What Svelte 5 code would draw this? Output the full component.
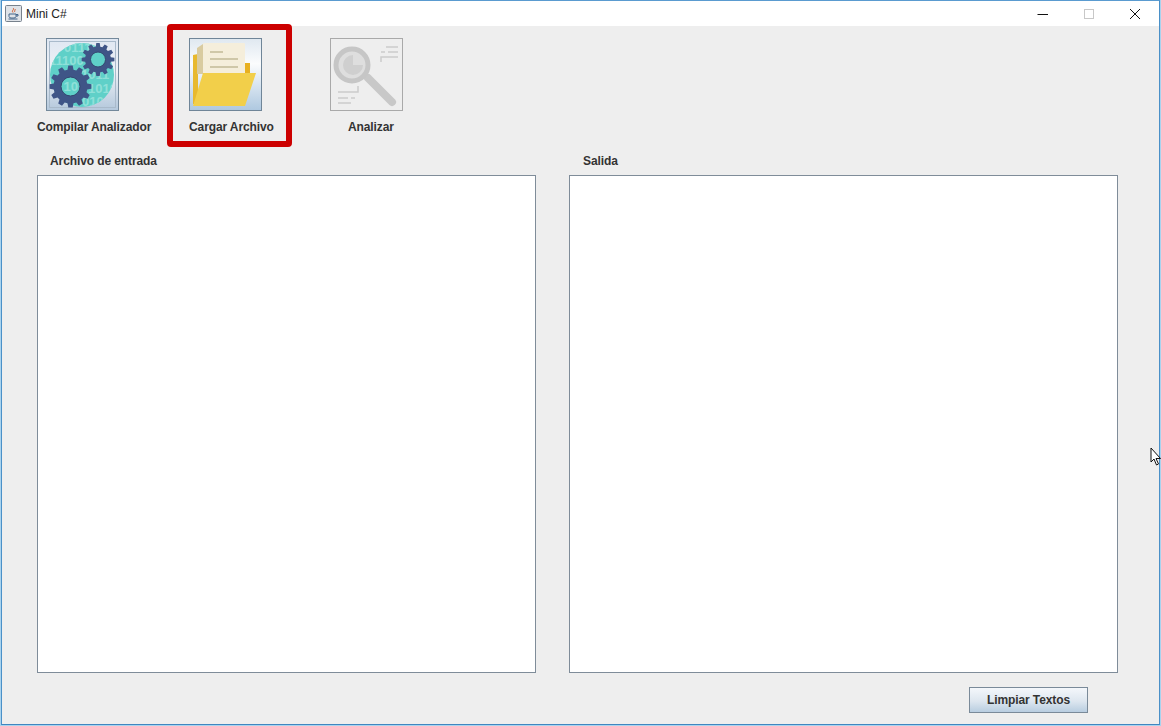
<script>
	// builds a cog outline around a centre
	function gear(cx, cy, outer, inner, teeth) {
		const pts = [];
		const step = (Math.PI * 2) / teeth;
		for (let i = 0; i < teeth; i++) {
			const a = i * step;
			for (const [off, r] of [[-0.34, inner], [-0.2, outer], [0.2, outer], [0.34, inner]]) {
				const t = a + off * step;
				pts.push((cx + Math.cos(t) * r).toFixed(1) + ',' + (cy + Math.sin(t) * r).toFixed(1));
			}
		}
		return pts.join(' ');
	}

	const bits = [
		{ x: 18, y: 14, t: '01110' },
		{ x: 3, y: 27, t: '11100' },
		{ x: 35, y: 41, t: '1011' },
		{ x: 42, y: 55, t: '1010' },
		{ x: 36, y: 68, t: '010' }
	];
</script>

<div class="window">
	<header class="titlebar">
		<div class="title">
			<svg class="java" width="17" height="17" viewBox="0 0 17 17">
				<rect x="0.5" y="0.5" width="16" height="16" rx="1" fill="#dfe3e8" stroke="#77818c" />
				<path d="M8 3c2 1.5-2 2.5 0 4.5M10 4c1 1-1.500 2 0 3" fill="none" stroke="#d0592a" stroke-width="1" />
				<path d="M4 9h7v2.500a2 2 0 0 1-2 1.500H6a2 2 0 0 1-2-1.500zM11 9.500h2v1.500h-2M3.500 14h9" fill="none" stroke="#44668c" stroke-width="1" />
			</svg>
			<span>Mini C#</span>
		</div>
		<div class="controls">
			<span class="ctl">
				<svg width="12" height="12" viewBox="0 0 12 12"><path d="M0.500 6.500h10.500" stroke="#111" stroke-width="1" /></svg>
			</span>
			<span class="ctl">
				<svg width="12" height="12" viewBox="0 0 12 12"><rect x="1.500" y="1.500" width="9" height="9" fill="none" stroke="#c8c8c8" /></svg>
			</span>
			<span class="ctl">
				<svg width="12" height="12" viewBox="0 0 12 12"><path d="M1 1l10 10M11 1L1 11" stroke="#111" stroke-width="1" /></svg>
			</span>
		</div>
	</header>

	<main class="content">
		<section class="toolbar">
			<div class="tool first">
				<button class="icon-btn">
					<svg width="73" height="73" viewBox="0 0 73 73">
						<defs>
							<linearGradient id="blueish" x1="0" y1="0" x2="0" y2="1">
								<stop offset="0" stop-color="#dfe7f2" />
								<stop offset="0.45" stop-color="#eef1f6" />
								<stop offset="1" stop-color="#b4c8dc" />
							</linearGradient>
							<clipPath id="disc"><circle cx="36" cy="37" r="32" /></clipPath>
						</defs>
						<rect x="0.500" y="0.500" width="72" height="72" fill="url(#blueish)" stroke="#74899b" />
						<rect x="3.500" y="3.500" width="66" height="66" fill="none" stroke="#a9bacb" />
						<circle cx="36" cy="37" r="32" fill="#5fd0c8" />
						<g clip-path="url(#disc)">
							{#each bits as b}
								<text x={b.x} y={b.y} class="bit">{b.t}</text>
							{/each}
						</g>
						<polygon points={gear(52, 21.500, 16.500, 13, 12)} fill="#3f5587" />
						<circle cx="52" cy="21.500" r="7.500" fill="#5fd0c8" stroke="#33466f" />
						<polygon points={gear(24.500, 48.500, 21, 17, 12)} fill="#3f5587" />
						<circle cx="24.500" cy="48.500" r="9.500" fill="#5fd0c8" stroke="#33466f" />
						<text x="17.500" y="53" class="bit">10</text>
					</svg>
				</button>
				<span class="label">Compilar Analizador</span>
			</div>

			<div class="tool second">
				<button class="icon-btn">
					<svg width="73" height="73" viewBox="0 0 73 73">
						<defs>
							<linearGradient id="sky" x1="0" y1="0" x2="0" y2="1">
								<stop offset="0" stop-color="#dfe8f0" />
								<stop offset="0.35" stop-color="#fbfcfd" />
								<stop offset="1" stop-color="#aec8e0" />
							</linearGradient>
						</defs>
						<rect x="0.500" y="0.500" width="72" height="72" fill="url(#sky)" stroke="#6f8598" />
						<path d="M4 17l5-1v50H4z" fill="#e8b92e" />
						<path d="M8 10l6-4v30H8z" fill="#d9cba0" />
						<path d="M56 25h5v12h-5z" fill="#e8b020" />
						<rect x="14" y="5" width="42" height="32" rx="1" fill="#f5eedb" />
						<path d="M21 14h13M21 21h28M21 29h28" stroke="#cfc7a8" stroke-width="2" />
						<path d="M14 35h53L56 68H4z" fill="#f2cf4a" />
					</svg>
				</button>
				<span class="label">Cargar Archivo</span>
			</div>

			<div class="tool third">
				<button class="icon-btn disabled">
					<svg width="73" height="73" viewBox="0 0 73 73">
						<rect x="0.500" y="0.500" width="72" height="72" fill="#eeeeee" stroke="#a9a9a9" />
						<path d="M38 40l24 24" stroke="#c8c8c8" stroke-width="8" stroke-linecap="round" />
						<circle cx="22" cy="27" r="16" fill="#dedede" stroke="#c6c6c6" stroke-width="5" />
						<path d="M23 17a10 10 0 1 0 10 10H23z" fill="#cfcfcf" />
						<path d="M51 24v-5h17M51 14h4M58 14h10M56 9h12M8 54h20v-6M8 60h10M21 60h4M8 65h13" fill="none" stroke="#cccccc" stroke-width="1.500" />
					</svg>
				</button>
				<span class="label">Analizar</span>
			</div>
		</section>

		<section class="panels">
			<div class="panel">
				<span class="panel-title">Archivo de entrada</span>
				<div class="textbox"></div>
			</div>
			<div class="panel">
				<span class="panel-title salida">Salida</span>
				<div class="textbox"></div>
			</div>
		</section>

		<footer class="actions">
			<button class="clear">Limpiar Textos</button>
		</footer>
	</main>

	<!-- resize cursor caught in the screenshot -->
	<svg class="cursor" width="12" height="20" viewBox="0 0 12 20">
		<path d="M1 1v14l3-3 2.500 6 2-1-2.500-5.500h4.500z" fill="#fff" stroke="#111" stroke-width="1" />
	</svg>
</div>

<style>
	:global(body) {
		margin: 0;
		background: #a9d3ee;
	}

	.window {
		position: relative;
		box-sizing: border-box;
		width: 1159px;
		height: 725px;
		margin-left: 1px;
		background: #eeeeee;
		border-left: 1px solid #4a90c8;
		border-right: 1px solid #4a90c8;
		border-top: 1px solid #5a9bd0;
		border-bottom: 1px solid #3f86c0;
		font-family: 'Liberation Sans', Arial, sans-serif;
		display: flex;
		flex-direction: column;
	}

	.titlebar {
		height: 25px;
		flex: none;
		background: #fff;
		display: flex;
		justify-content: space-between;
		align-items: center;
	}

	.title {
		display: flex;
		align-items: center;
		gap: 4px;
		padding-left: 3px;
		font-size: 12px;
		color: #222;
	}

	.java {
		display: block;
	}

	.controls {
		display: flex;
		align-items: center;
		padding-right: 1px;
	}

	.ctl {
		width: 46px;
		display: flex;
		justify-content: center;
	}

	.ctl svg {
		display: block;
	}

	.content {
		flex: 1;
		display: flex;
		flex-direction: column;
		padding-left: 35px;
		padding-right: 39px;
	}

	.toolbar {
		display: flex;
		height: 125px;
		flex: none;
		margin-top: -2px;
	}

	.tool {
		display: flex;
		flex-direction: column;
		box-sizing: border-box;
		padding-top: 14px;
	}

	.first {
		width: 130px;
	}

	.first .icon-btn {
		margin-left: 9px;
	}

	.second {
		width: 125px;
		height: 123px;
		border: 6px solid #cc0000;
		border-radius: 4px;
		padding-top: 8px;
		padding-left: 16px;
	}

	.third {
		margin-left: 38px;
	}

	.icon-btn {
		display: block;
		width: 73px;
		height: 73px;
		padding: 0;
		border: none;
		background: none;
	}

	.icon-btn svg {
		display: block;
	}

	.third .label {
		margin-left: 18px;
	}

	.label {
		margin-top: 9px;
		font-size: 12px;
		line-height: 14px;
		font-weight: 700;
		letter-spacing: -0.1px;
		color: #333;
		white-space: nowrap;
	}

	.bit {
		font-family: 'Liberation Sans', Arial, sans-serif;
		font-size: 13px;
		font-weight: 700;
		fill: #8fe0d9;
	}

	.panels {
		display: grid;
		grid-template-columns: 499px 549px;
		column-gap: 33px;
		flex: none;
	}

	.panel {
		display: flex;
		flex-direction: column;
	}

	.panel-title {
		font-size: 12px;
		line-height: 14px;
		font-weight: 700;
		letter-spacing: -0.1px;
		color: #333;
		padding-left: 13px;
		margin-top: 5px;
		margin-bottom: 7px;
	}

	.salida {
		padding-left: 14px;
	}

	.textbox {
		box-sizing: border-box;
		height: 498px;
		background: #fff;
		border: 1px solid #7f8c99;
	}

	.actions {
		display: flex;
		justify-content: flex-end;
		margin-top: 14px;
	}

	.clear {
		width: 119px;
		height: 26px;
		margin-right: 32px;
		padding: 0;
		border: 1px solid #7a8a99;
		background: linear-gradient(#f4f7fb, #dde6ef 55%, #b8cde0);
		font-family: 'Liberation Sans', Arial, sans-serif;
		font-size: 12px;
		font-weight: 700;
		letter-spacing: -0.1px;
		color: #333;
	}

	.cursor {
		position: absolute;
		left: 1148px;
		top: 446px;
	}
</style>
